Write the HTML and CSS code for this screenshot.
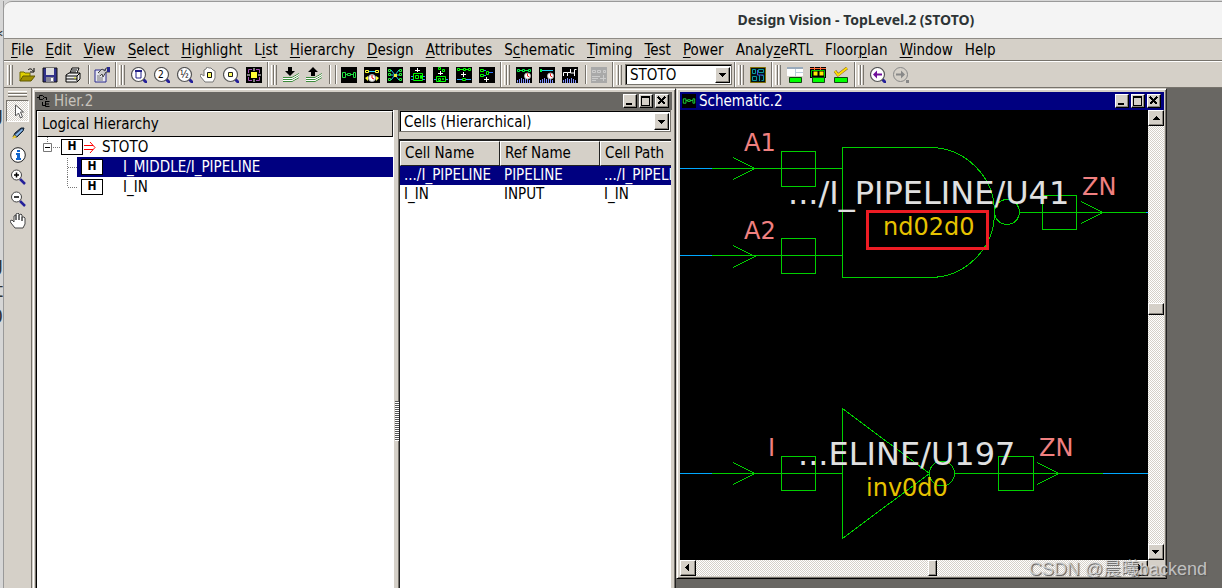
FILE: index.html
```
<!DOCTYPE html>
<html lang="en">
<head>
<meta charset="utf-8">
<title>Design Vision - TopLevel.2 (STOTO)</title>
<link rel="stylesheet" href="styles.css">
</head>
<body>
<svg class="defs" aria-hidden="true">
  <symbol id="lens" viewBox="0 0 16 16"><path d="M12 12l4 4" stroke="#24209a" stroke-width="3"/><circle cx="7.5" cy="7.5" r="7" fill="#fff" stroke="#555" stroke-width="1.2"/></symbol>
  <symbol id="gates" viewBox="0 0 16 16"><path fill="#000" d="M0 0h16v16H0z"/><path d="M1.500 5.500h3v5h-3zM12.500 5.500h2v5h-2zM6.500 6.500h3v2h-3zM4.500 7.500h2M9.500 7.500h3" fill="none" stroke="#20e040"/></symbol>
  <symbol id="down" viewBox="0 0 10 10"><path d="M1 3h7v1H7v1H6v1H5v1H4V6H3V5H2V4H1z"/></symbol>
  <symbol id="pins" viewBox="0 0 16 16"><path d="M1.500 15.500V13M3.500 16v-4M5.500 16v-5M7.500 16v-4M9.500 16v-5M11.500 16v-4M13.500 16v-3" stroke="#8090ff"/></symbol>
  <symbol id="clock" viewBox="0 0 8 8"><circle cx="4" cy="4" r="3.500" fill="#fff" stroke="#aaa"/><path d="M4 1v3l2 1" stroke="#e00" fill="none"/></symbol>
  <symbol id="min" viewBox="0 0 10 10"><path d="M1 7h6v2H1z"/></symbol>
  <symbol id="max" viewBox="0 0 10 10"><path d="M.5 1h8v8h-8z" fill="none" stroke="#000"/><path d="M0 0h9v2H0z"/></symbol>
  <symbol id="close" viewBox="0 0 10 10"><path d="M1 1l7 7M8 1L1 8" stroke="#000" stroke-width="1.6"/></symbol>
</svg>
<div class="desktop">
  <div class="gutter" aria-hidden="true"><div class="frag frag-a">*</div><div class="frag frag-b">g</div><div class="frag frag-c">g</div><div class="frag">t</div><div class="frag">0</div></div>
  <div class="app">
    <header class="titlebar"><h1>Design Vision - TopLevel.2 (STOTO)</h1></header>
    <nav class="menubar">
      <button><u>F</u>ile</button><button><u>E</u>dit</button><button><u>V</u>iew</button><button><u>S</u>elect</button><button><u>H</u>ighlight</button><button>L<u>i</u>st</button><button><u>H</u>ierarchy</button><button><u>D</u>esign</button><button><u>A</u>ttributes</button><button>S<u>c</u>hematic</button><button><u>T</u>iming</button><button><u>T</u>est</button><button><u>P</u>ower</button><button>Analy<u>z</u>eRTL</button><button>Floor<u>p</u>lan</button><button><u>W</u>indow</button><button>Help</button>
    </nav>
    <div class="toolbar">
      <div class="group"><i class="grip"></i>
        <button aria-label="Open"><svg viewBox="0 0 16 16"><path d="M1 14V5h4l1 1h5v3" fill="#e0d000" stroke="#706800"/><path d="M1 14l3-5h12l-4 5z" fill="#a09000" stroke="#605800"/><path d="M9 3c2-2 4-1 5 1M15 1v4h-4" fill="none" stroke="#000"/></svg></button>
        <button aria-label="Save"><svg viewBox="0 0 16 16"><path d="M1 1h14v14H1z" fill="#32328a" stroke="#111"/><path d="M4 1h8v7H4z" fill="#ddd"/><path d="M4 10h8v5H4z" fill="#889"/><path d="M9 11h2v3H9z" fill="#fff"/></svg></button>
        <button aria-label="Print"><svg viewBox="0 0 16 16"><path d="M5 6l2-5h7l-2 5" fill="#fff" stroke="#000"/><path d="M7 3h5M6 5h5" stroke="#000"/><path d="M1 8l3-2h11v6l-3 3H1z" fill="#eee" stroke="#000"/><path d="M1 9h11v5M12 9l3-3M1 12h11" fill="none" stroke="#000"/><path d="M9 11h2" stroke="#dd0"/></svg></button>
        <i class="sep"></i>
        <button aria-label="Properties"><svg viewBox="0 0 16 16"><path d="M1 3h11v12H1z" fill="#e8e8f0" stroke="#28288c"/><path d="M3 11h6M3 13h6M3 9h3" stroke="#777"/><path d="M4 6l4-4 3 2 1-3h4v4h-4l-3 5-1-3-2 2" fill="#ccc" stroke="#444"/><path d="M13 0h3v5h-3z" fill="#28288c"/></svg></button>
      </div>
      <div class="group"><i class="grip"></i>
        <button aria-label="Zoom fit"><svg viewBox="0 0 16 16"><use href="#lens"/><path d="M5 4h5v7H5z" fill="none" stroke="#22228a"/><path d="M4 3h7v2H4z" fill="#22228a"/></svg></button>
        <button aria-label="Zoom 2x"><svg viewBox="0 0 16 16"><use href="#lens"/><text x="4" y="11" class="num">2</text></svg></button>
        <button aria-label="Zoom half"><svg viewBox="0 0 16 16"><use href="#lens"/><text x="3" y="11" class="num">½</text></svg></button>
        <button aria-label="Pan"><svg viewBox="0 0 16 16"><path d="M5 15l-5-6 1-2 3 2V3l2-1 1-2 2 1 2 0 2 2 2 1v7l-2 4z" fill="#fff" stroke="#777"/><path d="M7.500 5.500h4v5h-4z" fill="#ff6" stroke="#111"/></svg></button>
        <button aria-label="Zoom selection"><svg viewBox="0 0 16 16"><use href="#lens"/><path d="M5.500 5.500h4v4h-4z" fill="#ff6" stroke="#222"/></svg></button>
        <button aria-label="Full view"><svg viewBox="0 0 16 16"><path d="M0 0h16v16H0z"/><path d="M2.500 6V2.500H6M10 2.500h3.500V6M13.500 10v3.500H10M6 13.500H2.500V10" fill="none" stroke="#a050b0"/><path d="M5 5h6v6H5z" fill="#ff3"/><path d="M8 1v3M8 12v3M1 8h3M12 8h3" stroke="#fff"/></svg></button>
      </div>
      <div class="group"><i class="grip"></i>
        <button aria-label="Push down"><svg viewBox="0 0 16 16"><path d="M0 10.500h9l7-4M0 12.500h9l7-4M0 14.500h9l7-4" fill="none" stroke="#3b8b3b"/><path d="M0 11.500h9l7-4M0 13.500h9l7-4" fill="none" stroke="#fff"/><path d="M5 0h4v4h3L7 9 2 4h3z"/></svg></button>
        <button aria-label="Pop up"><svg viewBox="0 0 16 16"><path d="M0 10.500h9l7-4M0 12.500h9l7-4M0 14.500h9l7-4" fill="none" stroke="#3b8b3b"/><path d="M0 11.500h9l7-4M0 13.500h9l7-4" fill="none" stroke="#fff"/><path d="M5 9V5H2l5-5 5 5H9v4z"/></svg></button>
        <i class="sep"></i><i class="sep"></i>
        <button aria-label="Schematic"><svg viewBox="0 0 16 16"><use href="#gates"/></svg></button>
        <button aria-label="Path schematic"><svg viewBox="0 0 16 16"><path d="M0 0h16v16H0z"/><path d="M1.500 3.500h3v2h-3zM11.500 3.500h3v2h-3z" fill="none" stroke="#ff3"/><path d="M5 4.500h6" stroke="#2ce"/><path d="M1 11l3-2v5zM15 11l-3-2v5z" fill="#ff3"/><use href="#clock" x="4" y="7" width="8" height="8"/></svg></button>
        <button aria-label="Fan"><svg viewBox="0 0 16 16"><path d="M0 0h16v16H0z"/><path d="M4 3l4 5 4-5M4 13l4-5 4 5M3 8h10" fill="none" stroke="#2ce"/><path d="M1.500 2.500h2v2h-2zM12.500 2.500h2v2h-2zM1.500 11.500h2v2h-2zM12.500 11.500h2v2h-2zM1.500 6.500h2v2h-2zM12.500 6.500h2v2h-2z" fill="none" stroke="#2e3"/><path d="M7 7h3v3H7z" fill="#ee3"/></svg></button>
        <button aria-label="Add fanin"><svg viewBox="0 0 16 16"><path d="M0 0h16v16H0z"/><path d="M7.500 1v4M5 3.500h5" stroke="#fff"/><path d="M3.500 6.500h9v7h-9zM5.500 8.500h3v3h-3zM10.500 8.500h1v3h-1z" fill="none" stroke="#0f0"/><path d="M1 9.500h2M13 9.500h2M1 12.500h2M13 12.500h2" stroke="#38f"/></svg></button>
        <button aria-label="Add fanout"><svg viewBox="0 0 16 16"><path d="M0 0h16v16H0z"/><path d="M7.500 4v4M5 6.500h5" stroke="#fff"/><path d="M3.500 9.500h9v5h-9zM5.500 .5h2v2h-2zM9.500 2.500h2v2h-2zM5.500 11.500h2v2h-2zM9.500 11.500h1v1h-1z" fill="none" stroke="#0f0"/><path d="M1 12.500h2M13 12.500h2" stroke="#38f"/></svg></button>
        <button aria-label="Insert"><svg viewBox="0 0 16 16"><path d="M0 0h16v16H0z"/><path d="M1.500 1.500h2v2h-2zM7.500 1.500h2v2h-2zM12.500 1.500h2v2h-2zM3 2.500h4M9 2.500h3M6.500 11.500h3v2h-3z" fill="none" stroke="#0f0"/><path d="M7.500 5v5M5 7.500h5" stroke="#fff"/><path d="M1 12.500h5M10 12.500h5" stroke="#3af"/></svg></button>
        <button aria-label="Remove"><svg viewBox="0 0 16 16"><path d="M0 0h16v16H0z"/><path d="M1.500 2.500h3v2h-3zM1.500 7.500h3v2h-3zM7.500 4.500h2v3h-2z" fill="none" stroke="#0f0"/><path d="M5 3.500h2M5 8.500h2M10 5.500h4" fill="none" stroke="#37f"/><path d="M7.500 10v5M5 12.500h5" stroke="#fff"/></svg></button>
      </div>
      <div class="group"><i class="grip"></i>
        <button aria-label="Path slack"><svg viewBox="0 0 16 16"><path d="M0 0h16v16H0z"/><path d="M1.500 2.500h2v2h-2zM6.500 2.500h2v2h-2zM12.500 2.500h2v2h-2zM4 3.500h2M9 3.500h3" fill="none" stroke="#0e4"/><use href="#pins"/><use href="#clock" x="8" y="5" width="7" height="8"/></svg></button>
        <button aria-label="Endpoint slack"><svg viewBox="0 0 16 16"><path d="M0 0h16v16H0z"/><path d="M2 3.500h12" stroke="#2ce"/><path d="M1 2h2v3H1z" fill="#0e4"/><use href="#pins"/><use href="#clock" x="8" y="5" width="7" height="8"/></svg></button>
        <button aria-label="Histogram"><svg viewBox="0 0 16 16"><path d="M0 0h16v16H0z"/><use href="#pins"/><path d="M1.500 9V5.500h4V9M5.500 5.500h3V2.500M8.500 2v4h4V2.500h2M12.500 6v3" fill="none" stroke="#fff"/></svg></button>
        <i class="sep"></i>
        <button aria-label="Unavailable" disabled><svg viewBox="0 0 16 16"><path d="M0 0h16v16H0z" fill="#a9a9a9"/><path d="M1.500 3.500h3v2h-3zM6.500 3.500h3v2h-3zM12.500 3.500h2v2h-2zM1 9.500h8M1 11.500h6M1 13.500h4M9 11.500h6M12.500 8v6" fill="none" stroke="#ccc"/></svg></button>
      </div>
      <div class="group"><i class="grip"></i><span class="combo combo-design"><select aria-label="Current design"><option>STOTO</option></select><span class="drop"><svg viewBox="0 0 10 10"><use href="#down"/></svg></span></span></div>
      <div class="group"><i class="grip"></i>
        <button aria-label="Layout"><svg viewBox="0 0 16 16"><path d="M.5.500h15v15H.5z" fill="#001018" stroke="#807000"/><path d="M2.500 2.500h3v4h-3zM8.500 2.500h5v3h-5zM2.500 9.500h4v4h-4zM9.500 8v6M11.500 8.500h2v5h-2" fill="none" stroke="#0a9a9a"/><path d="M7.500 3v5h6" fill="none" stroke="#45d"/></svg></button>
      </div>
      <div class="group"><i class="grip"></i>
        <button aria-label="Report"><svg viewBox="0 0 16 16"><path d="M0 0h16v9H0z" fill="#fff"/><path d="M0 0h16v2H0z" fill="#9ab"/><path d="M8.500 2v7M9 5.500h7" stroke="#bcd"/><path d="M2.500 10.500h12v5h-12z" fill="#0f0" stroke="#141"/></svg></button>
        <button aria-label="Compare"><svg viewBox="0 0 16 16"><path d="M0 0h16v11H0z"/><path d="M0 1.500h16M4.500 0v3M10.500 0v3" stroke="#f63"/><path d="M1.500 10V3.500h13V10" fill="none" stroke="#0c0"/><path d="M4.500 5.500h2v2h-2zM10.500 5.500h2v2h-2z" fill="none" stroke="#fe0" stroke-width="2"/><path d="M2.500 10.500h12v5h-12z" fill="#0f0" stroke="#141"/></svg></button>
        <button aria-label="Check"><svg viewBox="0 0 16 16"><path d="M2 4l3 4 9-7" fill="none" stroke="#863" stroke-width="3"/><path d="M2 4l3 4 9-7" fill="none" stroke="#fd0" stroke-width="2"/><path d="M1.500 10.500h13v5h-13z" fill="#0f0" stroke="#141"/></svg></button>
      </div>
      <div class="group group-last"><i class="grip"></i>
        <button aria-label="Back"><svg viewBox="0 0 16 16"><use href="#lens"/><path d="M3 7.500l4-4v3h5v2H7v3z" fill="#70109a"/></svg></button>
        <button aria-label="Forward" disabled><svg viewBox="0 0 16 16"><circle cx="7.500" cy="7.500" r="7" fill="none" stroke="#888"/><path d="M12 7.500l-4-4v3H3v2h5v3zM13 13h3v3h-3z" fill="#888"/></svg></button>
      </div>
    </div>
    <main class="work">
      <aside class="tools">
        <i class="grip-h"></i>
        <button class="on" aria-label="Select"><svg viewBox="0 0 16 16"><path d="M5.500 2v11l3-3 2 5 2-1-2-5h3z" fill="#fff" stroke="#555"/></svg></button>
        <button aria-label="Highlighter"><svg viewBox="0 0 16 16"><path d="M3 12l2-4 6-5h3l-1 3-6 6z" fill="#346" stroke="#123"/><path d="M5 10l7-6 1 1-6 6z" fill="#8be"/><path d="M2 14l2-4 3 2z" fill="#ec3"/></svg></button>
        <button aria-label="Info"><svg viewBox="0 0 16 16"><circle cx="8" cy="8" r="7.300" fill="#fff" stroke="#222"/><path d="M7 3h3v2H7zM6 6h4v5h1v2H6v-2h1V8H6z" fill="#16c"/></svg></button>
        <button aria-label="Zoom in"><svg viewBox="0 0 16 16"><path d="M10 10l5 5" stroke="#24209a" stroke-width="2.500"/><circle cx="6.500" cy="6" r="5" fill="#fff" stroke="#444"/><path d="M4 6h5M6.500 3.500v5" stroke="#000" stroke-width="1.500"/></svg></button>
        <button aria-label="Zoom out"><svg viewBox="0 0 16 16"><path d="M10 10l5 5" stroke="#24209a" stroke-width="2.500"/><circle cx="6.500" cy="6" r="5" fill="#fff" stroke="#444"/><path d="M4 6h5" stroke="#000" stroke-width="1.500"/></svg></button>
        <button aria-label="Pan"><svg viewBox="0 0 16 16"><path d="M5 15l-4-5-1-2 2-1 2 2V3l2-1v5-6l2-1 1 1v6-5l2-1 1 1v6-4l2 0 1 1v6l-2 4z" fill="#fff" stroke="#444"/></svg></button>
      </aside>
      <div class="mdi">
        <section class="win">
          <div class="caption"><svg class="cap-icon" viewBox="0 0 14 14"><path d="M2.500 1.500h3l2 2-2 2h-3zM0 3.500h2M8 3.500h1.500V6M5.500 8v3.500H8M8.500 7.500h4M8.500 7v5.500h4M9 10h3" fill="none" stroke="#000"/></svg><h2>Hier.2</h2><button aria-label="Minimize"><svg viewBox="0 0 10 10"><use href="#min"/></svg></button><button aria-label="Maximize"><svg viewBox="0 0 10 10"><use href="#max"/></svg></button><button aria-label="Close"><svg viewBox="0 0 10 10"><use href="#close"/></svg></button></div>
          <div class="hier">
            <div class="tree">
              <div class="colhead">Logical Hierarchy</div>
              <div class="node"><svg class="twig" viewBox="0 0 24 20"><path d="M10.500 0v5M16 10.500h8" stroke="#777" stroke-dasharray="1 1"/><path d="M6.500 6.500h8v8h-8z" fill="#fff" stroke="#777"/><path d="M8 10.500h5" stroke="#000"/></svg><b>H</b><svg class="arrow" viewBox="0 0 14 20"><path d="M1 8.500h9M1 12.500h9M7 5l5 5.500L7 16" fill="none" stroke="#f00"/></svg><span>STOTO</span></div>
              <div class="node child"><svg class="twig" viewBox="0 0 10 20"><path d="M.5 1v19M1 10.500h9" stroke="#777" stroke-dasharray="1 1"/></svg><div class="pick sel"><b>H</b><span>I_MIDDLE/I_PIPELINE</span></div></div>
              <div class="node child"><svg class="twig" viewBox="0 0 10 20"><path d="M.5 0v10M1 10.500h9" stroke="#777" stroke-dasharray="1 1"/></svg><div class="pick"><b>H</b><span>I_IN</span></div></div>
            </div>
            <div class="split"><i></i></div>
            <div class="cells">
              <span class="combo combo-cells"><select aria-label="Object list"><option>Cells (Hierarchical)</option></select><span class="drop"><svg viewBox="0 0 10 10"><use href="#down"/></svg></span></span>
              <div class="list">
                <table>
                  <thead><tr><th>Cell Name</th><th>Ref Name</th><th>Cell Path</th></tr></thead>
                  <tbody><tr class="sel"><td>.../I_PIPELINE</td><td>PIPELINE</td><td>.../I_PIPELINE</td></tr><tr><td>I_IN</td><td>INPUT</td><td>I_IN</td></tr></tbody>
                </table>
              </div>
            </div>
          </div>
        </section>
        <section class="win win-schematic">
          <div class="caption active"><svg class="cap-icon" viewBox="0 0 16 16"><use href="#gates"/></svg><h2>Schematic.2</h2><button aria-label="Minimize"><svg viewBox="0 0 10 10"><use href="#min"/></svg></button><button aria-label="Maximize"><svg viewBox="0 0 10 10"><use href="#max"/></svg></button><button aria-label="Close"><svg viewBox="0 0 10 10"><use href="#close"/></svg></button></div>
          <div class="view">
            <svg class="canvas" viewBox="680 110 468 450" preserveAspectRatio="xMinYMin slice">
              <g class="wire">
                <path d="M680 168.500H842.500M680 255.500H842.500M1020 212.500H1148M680 473.500H842.500M955 473.500H1148"/>
                <path d="M733 157.500l22 11-22 11M733 245.500l22 11-22 11M1081 201.500l22 11-22 11M733 462.500l22 11-22 11M1037 462.500l22 11-22 11"/>
                <path d="M781.500 151.500h34v35h-34zM781.500 238.500h34v35h-34zM1042.500 195.500h34v34h-34zM781.500 456.500h34v34h-34zM998.500 456.500h35v34h-35z"/>
                <path d="M929.500 147.500H842.500v130H929.500A65 65 0 0 0 929.500 147.500M842.500 408.500v130l87-65z"/>
                <circle cx="1007" cy="212" r="12.500"/><circle cx="942" cy="473.500" r="12.500"/>
              </g>
              <path class="net" d="M680 168.500h32M680 255.500h32M680 473.500h32M1103 473.500h45M1146 212.500h2"/>
              <g class="pin"><text x="744" y="151">A1</text><text x="744" y="239">A2</text><text x="1082" y="195">ZN</text><text x="768" y="456">I</text><text x="1039" y="456">ZN</text></g>
              <g class="inst"><text x="788" y="204">.../I_PIPELINE/U41</text><text x="798" y="465">...ELINE/U197</text></g>
              <g class="ref"><text x="883" y="235">nd02d0</text><text x="866" y="496">inv0d0</text></g>
              <path class="mark" d="M867.500 211.500h120v37h-120z"/>
            </svg>
            <div class="bar bar-v"><button aria-label="Scroll up"><svg class="flip" viewBox="0 0 10 10"><use href="#down"/></svg></button><i class="room-a"></i><i class="thumb"></i><i class="room-b"></i><button aria-label="Scroll down"><svg viewBox="0 0 10 10"><use href="#down"/></svg></button></div>
            <div class="bar bar-h"><button aria-label="Scroll left"><svg viewBox="0 0 10 10"><path d="M6 1v7H5V7H4V6H3V5H2V4h1V3h1V2h1V1z"/></svg></button><i class="room-a"></i><i class="thumb"></i><i class="room-b"></i><button aria-label="Scroll right"><svg viewBox="0 0 10 10"><path d="M3 1v7h1V7h1V6h1V5h1V4H6V3H5V2H4V1z"/></svg></button></div>
          </div>
        </section>
      </div>
    </main>
  </div>
  <div class="credit">CSDN @晨曦backend</div>
</div>
</body>
</html>
```
FILE: styles.css
```
* { box-sizing: border-box; }
body { margin: 0; font: 15px/20px "DejaVu Sans Condensed", "DejaVu Sans", sans-serif; color: #000; background: #d6d6d6; }
button, select { font: inherit; color: inherit; margin: 0; padding: 0; border: 0; background: none; border-radius: 0; }
h1, h2 { margin: 0; font-weight: 400; }
svg { display: block; flex: none; }
.defs { position: absolute; width: 0; height: 0; }

.desktop { position: relative; display: flex; height: 100vh; padding-top: 1px; overflow: hidden; }
.gutter { flex: none; width: 4px; overflow: hidden; color: #333; font-size: 20px; line-height: 26px; border-right: 1px solid #999; }
.frag { direction: rtl; }
.frag-a { padding-top: 22px; }
.frag-b { padding-top: 52px; }
.frag-c { padding-top: 124px; }
.app { flex: 1; min-width: 0; display: flex; flex-direction: column; background: #d5d0c8; border-top: 1px solid #999; border-top-left-radius: 8px; overflow: hidden; }

.titlebar { flex: none; height: 37px; background: #f4f4f4; border-bottom: 1px solid #8e8b85; text-align: center; padding-left: 486px; }
.titlebar h1 { font: 700 14px/36px "Noto Sans", sans-serif; color: #2e3436; white-space: nowrap; }
.menubar { flex: none; display: flex; height: 22px; padding-left: 1px; border-bottom: 1px solid #77736c; }
.menubar button { padding: 0 6px; line-height: 20px; white-space: nowrap; }
u { text-underline-offset: 2px; text-decoration-thickness: 1px; }

.toolbar { flex: none; display: flex; height: 27px; border-bottom: 1px solid #77736c; border-top: 1px solid #fff; }
.group { display: flex; align-items: center; padding-left: 3px; padding-right: 1px; border-right: 1px solid #77736c; box-shadow: inset 1px 0 #fff; }
.group:first-child { box-shadow: none; }
.group-last { flex: 1; border-right: 0; }
.grip { width: 6px; height: 20px; margin-right: 3px; border: solid #fff; border-width: 0 0 0 1px; background: linear-gradient(90deg, #d5d0c8 1px, #77736c 1px 2px, #fff 2px 3px, #d5d0c8 3px 4px, #77736c 4px 5px); }
.toolbar button { width: 23px; height: 23px; padding: 1px 0 0 3px; }
.toolbar button svg { width: 16px; height: 16px; }
.sep { width: 6px; height: 19px; background: linear-gradient(90deg, transparent 3px, #77736c 3px 4px, #fff 4px 5px, transparent 5px); }
.num { font-size: 10px; }

.combo { display: flex; background: #fff; border: 1px solid #77736c; box-shadow: inset 1px 1px #000; padding: 2px 1px 1px 2px; }
.combo select { flex: 1; min-width: 0; appearance: none; padding-left: 2px; outline: 0; }
.combo-design { width: 107px; height: 21px; margin-right: 1px; }
.combo-design select { line-height: 16px; }
.drop { width: 15px; flex: none; display: grid; place-items: center; }
.drop, .caption button, .bar button, .thumb { background: #d5d0c8; border: 1px solid; border-color: #fff #000 #000 #fff; box-shadow: inset -1px -1px #8a867f; }
.drop svg, .caption button svg, .bar svg { width: 10px; height: 10px; }

.work { flex: 1; min-height: 0; display: flex; }
.tools { flex: none; width: 28px; padding: 3px 2px 0; border-right: 1px solid #77736c; display: flex; flex-direction: column; }
.grip-h { height: 6px; margin: 0 2px 3px; background: linear-gradient(#fff 1px, #d5d0c8 1px 2px, #77736c 2px 3px, #fff 3px 4px, #d5d0c8 4px 5px, #77736c 5px); }
.tools button { height: 22px; display: grid; place-items: center; }
.tools svg { width: 16px; height: 16px; }
.tools .on, .bar { background: repeating-conic-gradient(#fff 0 25%, #d5d0c8 0 50%) 0 0 / 2px 2px; }
.tools .on { border: 1px solid; border-color: #77736c #fff #fff #77736c; }

.mdi { flex: 1; min-width: 0; display: grid; grid-template-columns: 644fr 491fr 55fr; background: #696763; }
.win { min-width: 0; display: flex; flex-direction: column; padding: 3px 3px 0 2px; background: #d5d0c8; border: 1px solid; border-color: #d5d0c8 #222 #222 #d5d0c8; border-bottom: 0; box-shadow: inset 1px 1px #fff, inset -1px 0 #77736c; }
.win-schematic { padding: 3px 2px 2px 3px; margin-bottom: 9px; border-bottom: 1px solid #000; box-shadow: inset 1px 1px #fff, inset -1px -1px #77736c; }
.caption { flex: none; display: flex; align-items: center; gap: 2px; height: 18px; padding: 0 3px 0 2px; background: #696763; color: #c8c4bd; }
.caption h2 { flex: 1; font-size: 15px; line-height: 18px; padding-left: 1px; }
.caption.active { background: #000080; color: #fff; }
.cap-icon { width: 14px; height: 14px; }
.caption button { width: 14px; height: 14px; padding: 1px; }
.caption button svg { shape-rendering: crispEdges; }

.hier { flex: 1; min-height: 0; display: grid; grid-template-columns: 357fr 6px 273fr; border-left: 1px solid #77736c; }
.tree { min-width: 0; background: #fff; border: solid #000; border-width: 1px 0 0 1px; }
.colhead { height: 26px; padding: 0 4px; line-height: 24px; background: #d5d0c8; border: 1px solid; border-color: #fff #222 #000 #fff; }
.node { display: flex; height: 20px; }
.node > .twig { width: 24px; height: 20px; }
.node b { flex: none; width: 22px; height: 16px; margin-top: 2px; border: 1px solid #000; background: #fff; color: #000; font-size: 12px; line-height: 13px; text-align: center; }
.arrow { width: 14px; height: 20px; margin-right: 5px; }
.child { padding-left: 30px; }
.child > .twig { width: 10px; }
.pick { flex: 1; display: flex; gap: 20px; padding-left: 4px; }
.sel { background: #000080; color: #fff; }
.split { display: flex; align-items: center; border-left: 1px solid #fff; box-shadow: inset -1px 0 #77736c; }
.split i { width: 4px; height: 40px; margin: 144px 0 0 1px; background: repeating-linear-gradient(#555 0 1px, #fff 1px 2px); }
.cells { min-width: 0; display: flex; flex-direction: column; gap: 7px; padding-right: 1px; }
.combo-cells { height: 22px; }
.combo-cells select { line-height: 18px; }
.list { flex: 1; overflow: hidden; background: #fff; border: solid #222; border-width: 2px 0 0 1px; }
table { width: 300px; table-layout: fixed; border-collapse: separate; border-spacing: 0; }
th, td { padding: 0 4px; text-align: left; font-weight: 400; white-space: nowrap; overflow: hidden; line-height: 19px; }
th { height: 25px; background: #d5d0c8; border: 1px solid; border-color: #fff #222 #222 #fff; }

.view { flex: 1; min-height: 0; display: grid; grid-template: minmax(0, 1fr) 16px / minmax(0, 1fr) 16px; }
.canvas { width: 100%; height: 100%; background: #000; font-family: "DejaVu Sans", sans-serif; }
.wire, .net { fill: none; stroke: #00d000; shape-rendering: crispEdges; }
.net { stroke: #00a8ff; }
.pin, .ref { font-size: 24px; fill: #f08080; }
.ref { fill: #e6c200; }
.inst { font-size: 32px; fill: #e0e0e0; }
.mark { fill: none; stroke: #ed1c24; stroke-width: 3; }
.bar { display: flex; }
.bar-v { flex-direction: column; }
.bar button { flex: none; width: 16px; height: 16px; display: grid; place-items: center; }
.flip { transform: rotate(180deg); }
.bar-v .room-a { flex: 177; }
.bar-v .room-b { flex: 228; }
.bar-v .thumb { flex: none; height: 12px; }
.bar-h .room-a { flex: 232; }
.bar-h .room-b { flex: 195; }
.bar-h .thumb { flex: none; width: 9px; }

.credit { position: absolute; right: 15px; bottom: 7px; font: 18px/24px "Liberation Sans", "Noto Sans CJK SC", sans-serif; color: rgba(225, 225, 225, .75); text-shadow: 1px 1px 1px #555; }
```
